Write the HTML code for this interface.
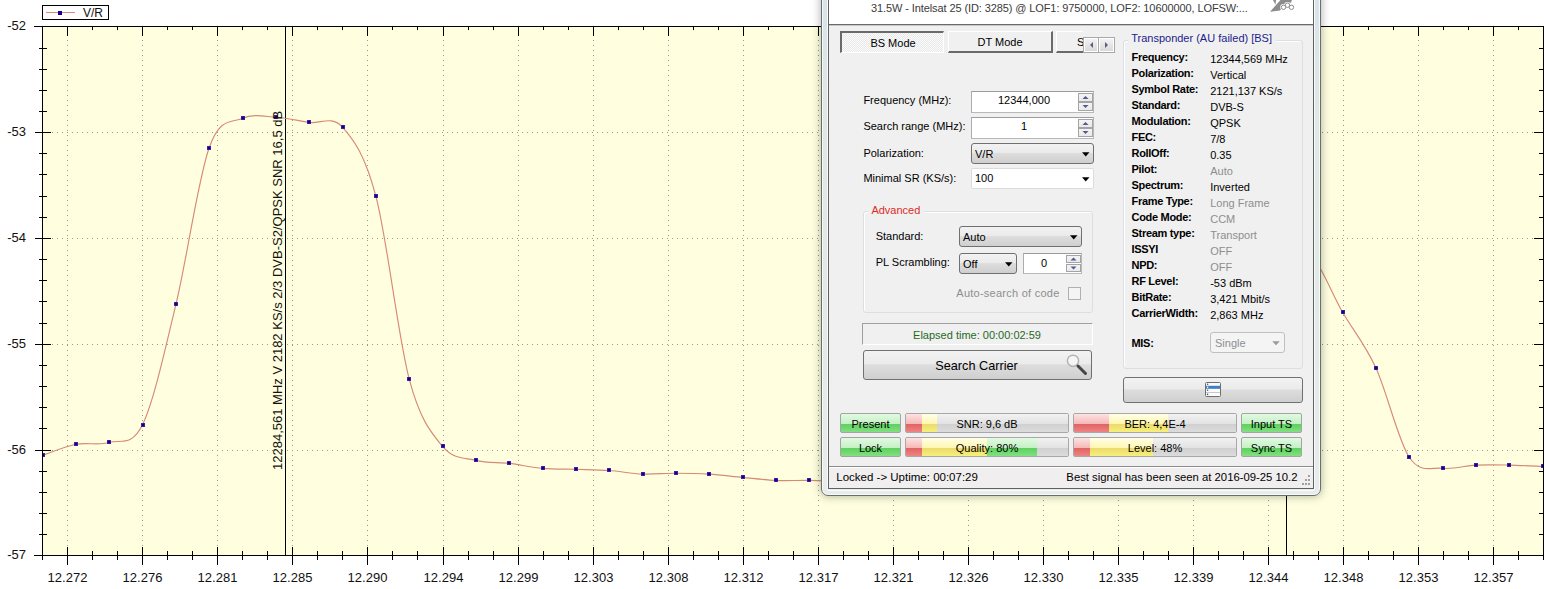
<!DOCTYPE html>
<html><head><meta charset="utf-8">
<style>
html,body{margin:0;padding:0;background:#fff;width:1544px;height:589px;overflow:hidden;position:relative;font-family:"Liberation Sans",sans-serif}
.al{font-family:"Liberation Sans",sans-serif;font-size:13px;fill:#111}
.lg{font-family:"Liberation Sans",sans-serif;font-size:12px;fill:#111}
</style></head><body>
<svg width="1544" height="589" viewBox="0 0 1544 589" style="position:absolute;left:0;top:0">
<rect x="43" y="27" width="1500" height="528" fill="#FFFFE0"/>
<path d="M67.5 30V555 M142.5 30V555 M217.5 30V555 M292.5 30V555 M367.5 30V555 M443.5 30V555 M518.5 30V555 M593.5 30V555 M668.5 30V555 M743.5 30V555 M818.5 30V555 M893.5 30V555 M968.5 30V555 M1043.5 30V555 M1118.5 30V555 M1193.5 30V555 M1268.5 30V555 M1343.5 30V555 M1418.5 30V555 M1493.5 30V555 M42 132.5H1543 M42 238.5H1543 M42 344.5H1543 M42 450.5H1543" stroke="#98988f" stroke-width="1" stroke-dasharray="1 4" fill="none" shape-rendering="crispEdges"/>
<path d="M34 26.5H1544 M34 555.5H1544 M42.5 26V560 M1543.5 26V555 M42.5 26v4 M42.5 551V560 M67.5 26v10 M67.5 547V565 M92.5 26v4 M92.5 551V560 M117.5 26v4 M117.5 551V560 M142.5 26v10 M142.5 547V565 M167.5 26v4 M167.5 551V560 M192.5 26v4 M192.5 551V560 M217.5 26v10 M217.5 547V565 M242.5 26v4 M242.5 551V560 M267.5 26v4 M267.5 551V560 M292.5 26v10 M292.5 547V565 M317.5 26v4 M317.5 551V560 M342.5 26v4 M342.5 551V560 M367.5 26v10 M367.5 547V565 M392.5 26v4 M392.5 551V560 M417.5 26v4 M417.5 551V560 M443.5 26v10 M443.5 547V565 M468.5 26v4 M468.5 551V560 M493.5 26v4 M493.5 551V560 M518.5 26v10 M518.5 547V565 M543.5 26v4 M543.5 551V560 M568.5 26v4 M568.5 551V560 M593.5 26v10 M593.5 547V565 M618.5 26v4 M618.5 551V560 M643.5 26v4 M643.5 551V560 M668.5 26v10 M668.5 547V565 M693.5 26v4 M693.5 551V560 M718.5 26v4 M718.5 551V560 M743.5 26v10 M743.5 547V565 M768.5 26v4 M768.5 551V560 M793.5 26v4 M793.5 551V560 M818.5 26v10 M818.5 547V565 M843.5 26v4 M843.5 551V560 M868.5 26v4 M868.5 551V560 M893.5 26v10 M893.5 547V565 M918.5 26v4 M918.5 551V560 M943.5 26v4 M943.5 551V560 M968.5 26v10 M968.5 547V565 M993.5 26v4 M993.5 551V560 M1018.5 26v4 M1018.5 551V560 M1043.5 26v10 M1043.5 547V565 M1068.5 26v4 M1068.5 551V560 M1093.5 26v4 M1093.5 551V560 M1118.5 26v10 M1118.5 547V565 M1143.5 26v4 M1143.5 551V560 M1168.5 26v4 M1168.5 551V560 M1193.5 26v10 M1193.5 547V565 M1218.5 26v4 M1218.5 551V560 M1243.5 26v4 M1243.5 551V560 M1268.5 26v10 M1268.5 547V565 M1293.5 26v4 M1293.5 551V560 M1318.5 26v4 M1318.5 551V560 M1343.5 26v10 M1343.5 547V565 M1368.5 26v4 M1368.5 551V560 M1393.5 26v4 M1393.5 551V560 M1418.5 26v10 M1418.5 547V565 M1443.5 26v4 M1443.5 551V560 M1468.5 26v4 M1468.5 551V560 M1493.5 26v10 M1493.5 547V565 M1518.5 26v4 M1518.5 551V560 M1543.5 26v4 M1543.5 551V560 M35 26.5H51 M1534 26.5H1543 M39 48.5H47 M1539 48.5H1543 M39 69.5H47 M1539 69.5H1543 M39 90.5H47 M1539 90.5H1543 M39 111.5H47 M1539 111.5H1543 M35 132.5H51 M1534 132.5H1543 M39 153.5H47 M1539 153.5H1543 M39 174.5H47 M1539 174.5H1543 M39 196.5H47 M1539 196.5H1543 M39 217.5H47 M1539 217.5H1543 M35 238.5H51 M1534 238.5H1543 M39 259.5H47 M1539 259.5H1543 M39 280.5H47 M1539 280.5H1543 M39 301.5H47 M1539 301.5H1543 M39 323.5H47 M1539 323.5H1543 M35 344.5H51 M1534 344.5H1543 M39 365.5H47 M1539 365.5H1543 M39 386.5H47 M1539 386.5H1543 M39 407.5H47 M1539 407.5H1543 M39 428.5H47 M1539 428.5H1543 M35 450.5H51 M1534 450.5H1543 M39 471.5H47 M1539 471.5H1543 M39 492.5H47 M1539 492.5H1543 M39 513.5H47 M1539 513.5H1543 M39 534.5H47 M1539 534.5H1543 M35 555.5H51 M1534 555.5H1543" stroke="#000" stroke-width="1" fill="none" shape-rendering="crispEdges"/>
<text x="67.5" y="582" text-anchor="middle" class="al">12.272</text>
<text x="142.5" y="582" text-anchor="middle" class="al">12.276</text>
<text x="217.5" y="582" text-anchor="middle" class="al">12.281</text>
<text x="292.5" y="582" text-anchor="middle" class="al">12.285</text>
<text x="367.5" y="582" text-anchor="middle" class="al">12.290</text>
<text x="443.5" y="582" text-anchor="middle" class="al">12.294</text>
<text x="518.5" y="582" text-anchor="middle" class="al">12.299</text>
<text x="593.5" y="582" text-anchor="middle" class="al">12.303</text>
<text x="668.5" y="582" text-anchor="middle" class="al">12.308</text>
<text x="743.5" y="582" text-anchor="middle" class="al">12.312</text>
<text x="818.5" y="582" text-anchor="middle" class="al">12.317</text>
<text x="893.5" y="582" text-anchor="middle" class="al">12.321</text>
<text x="968.5" y="582" text-anchor="middle" class="al">12.326</text>
<text x="1043.5" y="582" text-anchor="middle" class="al">12.330</text>
<text x="1118.5" y="582" text-anchor="middle" class="al">12.335</text>
<text x="1193.5" y="582" text-anchor="middle" class="al">12.339</text>
<text x="1268.5" y="582" text-anchor="middle" class="al">12.344</text>
<text x="1343.5" y="582" text-anchor="middle" class="al">12.348</text>
<text x="1418.5" y="582" text-anchor="middle" class="al">12.353</text>
<text x="1493.5" y="582" text-anchor="middle" class="al">12.357</text>
<text x="26" y="30.3" text-anchor="end" class="al">-52</text>
<text x="26" y="136.3" text-anchor="end" class="al">-53</text>
<text x="26" y="242.3" text-anchor="end" class="al">-54</text>
<text x="26" y="348.3" text-anchor="end" class="al">-55</text>
<text x="26" y="454.3" text-anchor="end" class="al">-56</text>
<text x="26" y="559.3" text-anchor="end" class="al">-57</text>
<path d="M285.5 27V555M1286.5 27V555" stroke="#000" stroke-width="1" shape-rendering="crispEdges"/>
<clipPath id="pc"><rect x="43" y="27" width="1500" height="528"/></clipPath>
<g clip-path="url(#pc)"><path d="M42.60 455.40C48.16 453.55 64.82 446.45 75.93 444.30C87.04 442.15 98.16 445.78 109.27 442.50C120.38 439.22 131.49 447.62 142.60 424.60C153.71 401.58 164.82 350.58 175.93 304.40C187.04 258.22 198.16 178.52 209.27 147.50C220.38 116.48 231.49 123.33 242.60 118.30C253.71 113.27 264.82 116.62 275.93 117.30C287.04 117.98 298.16 120.73 309.27 122.40C320.38 124.07 331.49 114.97 342.60 127.30C353.71 139.63 364.82 154.38 375.93 196.40C387.04 238.42 398.16 337.73 409.27 379.40C420.38 421.07 431.49 432.90 442.60 446.40C453.71 459.90 464.82 457.57 475.93 460.40C487.04 463.23 498.16 462.07 509.27 463.40C520.38 464.73 531.49 467.42 542.60 468.40C553.71 469.38 564.82 468.95 575.93 469.30C587.04 469.65 598.16 469.70 609.27 470.50C620.38 471.30 631.49 473.65 642.60 474.10C653.71 474.55 664.82 473.20 675.93 473.20C687.04 473.20 698.16 473.40 709.27 474.10C720.38 474.80 731.49 476.35 742.60 477.40C753.71 478.45 764.82 479.90 775.93 480.40C787.04 480.90 798.16 480.22 809.27 480.40C820.38 480.58 831.49 481.23 842.60 481.50C853.71 481.77 864.82 481.92 875.93 482.00C887.04 482.08 898.16 482.00 909.27 482.00C920.38 482.00 931.49 482.00 942.60 482.00C953.71 482.00 964.82 482.00 975.93 482.00C987.04 482.00 998.16 482.00 1009.27 482.00C1020.38 482.00 1031.49 482.00 1042.60 482.00C1053.71 482.00 1064.82 482.33 1075.93 482.00C1087.04 481.67 1098.16 482.00 1109.27 480.00C1120.38 478.00 1131.49 476.67 1142.60 470.00C1153.71 463.33 1164.82 455.00 1175.93 440.00C1187.04 425.00 1198.16 403.33 1209.27 380.00C1220.38 356.67 1231.49 319.67 1242.60 300.00C1253.71 280.33 1264.82 269.67 1275.93 262.00C1287.04 254.33 1298.16 245.63 1309.27 254.00C1320.38 262.37 1331.49 293.20 1342.60 312.20C1353.71 331.20 1364.82 343.82 1375.93 368.00C1387.04 392.18 1398.16 440.58 1409.27 457.30C1420.38 474.02 1431.49 467.00 1442.60 468.30C1453.71 469.60 1464.82 465.63 1475.93 465.10C1487.04 464.57 1498.16 464.87 1509.27 465.10C1520.38 465.33 1537.04 466.27 1542.60 466.50" stroke="#d68a76" stroke-width="1.15" fill="none"/>
<rect x="41" y="453" width="4" height="4" fill="#4a2aa8"/><rect x="41.7" y="453.7" width="2.6" height="2.6" fill="#0c0090"/>
<rect x="74" y="442" width="4" height="4" fill="#4a2aa8"/><rect x="74.7" y="442.7" width="2.6" height="2.6" fill="#0c0090"/>
<rect x="107" y="440" width="4" height="4" fill="#4a2aa8"/><rect x="107.7" y="440.7" width="2.6" height="2.6" fill="#0c0090"/>
<rect x="141" y="423" width="4" height="4" fill="#4a2aa8"/><rect x="141.7" y="423.7" width="2.6" height="2.6" fill="#0c0090"/>
<rect x="174" y="302" width="4" height="4" fill="#4a2aa8"/><rect x="174.7" y="302.7" width="2.6" height="2.6" fill="#0c0090"/>
<rect x="207" y="146" width="4" height="4" fill="#4a2aa8"/><rect x="207.7" y="146.7" width="2.6" height="2.6" fill="#0c0090"/>
<rect x="241" y="116" width="4" height="4" fill="#4a2aa8"/><rect x="241.7" y="116.7" width="2.6" height="2.6" fill="#0c0090"/>
<rect x="274" y="115" width="4" height="4" fill="#4a2aa8"/><rect x="274.7" y="115.7" width="2.6" height="2.6" fill="#0c0090"/>
<rect x="307" y="120" width="4" height="4" fill="#4a2aa8"/><rect x="307.7" y="120.7" width="2.6" height="2.6" fill="#0c0090"/>
<rect x="341" y="125" width="4" height="4" fill="#4a2aa8"/><rect x="341.7" y="125.7" width="2.6" height="2.6" fill="#0c0090"/>
<rect x="374" y="194" width="4" height="4" fill="#4a2aa8"/><rect x="374.7" y="194.7" width="2.6" height="2.6" fill="#0c0090"/>
<rect x="407" y="377" width="4" height="4" fill="#4a2aa8"/><rect x="407.7" y="377.7" width="2.6" height="2.6" fill="#0c0090"/>
<rect x="441" y="444" width="4" height="4" fill="#4a2aa8"/><rect x="441.7" y="444.7" width="2.6" height="2.6" fill="#0c0090"/>
<rect x="474" y="458" width="4" height="4" fill="#4a2aa8"/><rect x="474.7" y="458.7" width="2.6" height="2.6" fill="#0c0090"/>
<rect x="507" y="461" width="4" height="4" fill="#4a2aa8"/><rect x="507.7" y="461.7" width="2.6" height="2.6" fill="#0c0090"/>
<rect x="541" y="466" width="4" height="4" fill="#4a2aa8"/><rect x="541.7" y="466.7" width="2.6" height="2.6" fill="#0c0090"/>
<rect x="574" y="467" width="4" height="4" fill="#4a2aa8"/><rect x="574.7" y="467.7" width="2.6" height="2.6" fill="#0c0090"/>
<rect x="607" y="468" width="4" height="4" fill="#4a2aa8"/><rect x="607.7" y="468.7" width="2.6" height="2.6" fill="#0c0090"/>
<rect x="641" y="472" width="4" height="4" fill="#4a2aa8"/><rect x="641.7" y="472.7" width="2.6" height="2.6" fill="#0c0090"/>
<rect x="674" y="471" width="4" height="4" fill="#4a2aa8"/><rect x="674.7" y="471.7" width="2.6" height="2.6" fill="#0c0090"/>
<rect x="707" y="472" width="4" height="4" fill="#4a2aa8"/><rect x="707.7" y="472.7" width="2.6" height="2.6" fill="#0c0090"/>
<rect x="741" y="475" width="4" height="4" fill="#4a2aa8"/><rect x="741.7" y="475.7" width="2.6" height="2.6" fill="#0c0090"/>
<rect x="774" y="478" width="4" height="4" fill="#4a2aa8"/><rect x="774.7" y="478.7" width="2.6" height="2.6" fill="#0c0090"/>
<rect x="807" y="478" width="4" height="4" fill="#4a2aa8"/><rect x="807.7" y="478.7" width="2.6" height="2.6" fill="#0c0090"/>
<rect x="841" y="480" width="4" height="4" fill="#4a2aa8"/><rect x="841.7" y="480.7" width="2.6" height="2.6" fill="#0c0090"/>
<rect x="874" y="480" width="4" height="4" fill="#4a2aa8"/><rect x="874.7" y="480.7" width="2.6" height="2.6" fill="#0c0090"/>
<rect x="907" y="480" width="4" height="4" fill="#4a2aa8"/><rect x="907.7" y="480.7" width="2.6" height="2.6" fill="#0c0090"/>
<rect x="941" y="480" width="4" height="4" fill="#4a2aa8"/><rect x="941.7" y="480.7" width="2.6" height="2.6" fill="#0c0090"/>
<rect x="974" y="480" width="4" height="4" fill="#4a2aa8"/><rect x="974.7" y="480.7" width="2.6" height="2.6" fill="#0c0090"/>
<rect x="1007" y="480" width="4" height="4" fill="#4a2aa8"/><rect x="1007.7" y="480.7" width="2.6" height="2.6" fill="#0c0090"/>
<rect x="1041" y="480" width="4" height="4" fill="#4a2aa8"/><rect x="1041.7" y="480.7" width="2.6" height="2.6" fill="#0c0090"/>
<rect x="1074" y="480" width="4" height="4" fill="#4a2aa8"/><rect x="1074.7" y="480.7" width="2.6" height="2.6" fill="#0c0090"/>
<rect x="1107" y="478" width="4" height="4" fill="#4a2aa8"/><rect x="1107.7" y="478.7" width="2.6" height="2.6" fill="#0c0090"/>
<rect x="1141" y="468" width="4" height="4" fill="#4a2aa8"/><rect x="1141.7" y="468.7" width="2.6" height="2.6" fill="#0c0090"/>
<rect x="1174" y="438" width="4" height="4" fill="#4a2aa8"/><rect x="1174.7" y="438.7" width="2.6" height="2.6" fill="#0c0090"/>
<rect x="1207" y="378" width="4" height="4" fill="#4a2aa8"/><rect x="1207.7" y="378.7" width="2.6" height="2.6" fill="#0c0090"/>
<rect x="1241" y="298" width="4" height="4" fill="#4a2aa8"/><rect x="1241.7" y="298.7" width="2.6" height="2.6" fill="#0c0090"/>
<rect x="1274" y="260" width="4" height="4" fill="#4a2aa8"/><rect x="1274.7" y="260.7" width="2.6" height="2.6" fill="#0c0090"/>
<rect x="1307" y="252" width="4" height="4" fill="#4a2aa8"/><rect x="1307.7" y="252.7" width="2.6" height="2.6" fill="#0c0090"/>
<rect x="1341" y="310" width="4" height="4" fill="#4a2aa8"/><rect x="1341.7" y="310.7" width="2.6" height="2.6" fill="#0c0090"/>
<rect x="1374" y="366" width="4" height="4" fill="#4a2aa8"/><rect x="1374.7" y="366.7" width="2.6" height="2.6" fill="#0c0090"/>
<rect x="1407" y="455" width="4" height="4" fill="#4a2aa8"/><rect x="1407.7" y="455.7" width="2.6" height="2.6" fill="#0c0090"/>
<rect x="1441" y="466" width="4" height="4" fill="#4a2aa8"/><rect x="1441.7" y="466.7" width="2.6" height="2.6" fill="#0c0090"/>
<rect x="1474" y="463" width="4" height="4" fill="#4a2aa8"/><rect x="1474.7" y="463.7" width="2.6" height="2.6" fill="#0c0090"/>
<rect x="1507" y="463" width="4" height="4" fill="#4a2aa8"/><rect x="1507.7" y="463.7" width="2.6" height="2.6" fill="#0c0090"/>
<rect x="1541" y="464" width="4" height="4" fill="#4a2aa8"/><rect x="1541.7" y="464.7" width="2.6" height="2.6" fill="#0c0090"/>
</g>
<text transform="translate(281.7 470) rotate(-90)" class="al">12284,561 MHz V 2182 KS/s 2/3 DVB-S2/QPSK SNR 16,5 dB</text>
<rect x="42.5" y="5.5" width="66" height="14" fill="#fff" stroke="#000" stroke-width="1"/>
<path d="M46 12.5H75" stroke="#d98a78" stroke-width="1"/>
<rect x="58" y="11" width="4" height="4" fill="#10009a"/>
<text x="83" y="17" class="lg">V/R</text>
</svg>
<div style="position:absolute;left:821px;top:-30px;width:500px;height:526px;box-sizing:border-box;border:1px solid #686e6c;border-radius:0 0 7px 7px;background:linear-gradient(#d8e2ec,#dfe8e3 25%,#e2eae5 60%,#e8ecea);box-shadow:inset 0 0 0 1px rgba(255,255,255,0.75),0 0 9px 1px rgba(0,0,0,0.28)"></div>
<div style="position:absolute;left:827px;top:-30px;width:488px;height:521px;box-sizing:border-box;border:1px solid rgba(255,255,255,0.8);border-radius:0 0 2px 2px"></div>
<div style="position:absolute;left:828px;top:-30px;width:486px;height:519px;box-sizing:border-box;border:1px solid #5e6260;background:#f0f0f0"></div>
<div style="position:absolute;left:829px;top:0px;width:484px;height:24px;background:#fff"></div>
<div style="position:absolute;left:829px;top:24px;width:484px;height:1px;background:#6a6a6a"></div>
<div style="position:absolute;left:829px;top:25px;width:484px;height:1px;background:#c8c8c8"></div>
<div style="position:absolute;left:871px;top:2.69px;font-size:11px;line-height:11px;color:#3a3a3a;font-weight:normal;white-space:nowrap;letter-spacing:-0.1px">31.5W - Intelsat 25 (ID: 3285) @ LOF1: 9750000, LOF2: 10600000, LOFSW:...</div>
<svg style="position:absolute;left:1266px;top:0px" width="32" height="14" viewBox="0 0 32 14"><path d="M4 11.8 L14.5 0 L26 0 L25 2.5 L18 6 L14 10.5 Z" fill="#8c8c8c"/><path d="M7 0 L9.5 4.8 L10 0 Z" fill="#8c8c8c"/><circle cx="17.5" cy="7.3" r="3.3" fill="#fff"/><circle cx="21.5" cy="5.2" r="3.3" fill="#fff"/><circle cx="25.5" cy="7.3" r="3.3" fill="#fff"/><circle cx="17.5" cy="7.3" r="2.2" fill="#fff" stroke="#8c8c8c" stroke-width="1"/><circle cx="21.5" cy="5.2" r="2.2" fill="#fff" stroke="#8c8c8c" stroke-width="1"/><circle cx="25.5" cy="7.3" r="2.2" fill="#fff" stroke="#8c8c8c" stroke-width="1"/></svg>
<div style="position:absolute;left:840px;top:31px;width:104px;height:22px;box-sizing:border-box;border-style:solid;border-width:2px 1px 1px 2px;border-color:#6a6a6a #fff #fff #6a6a6a;background:repeating-conic-gradient(#fbfbfb 0 25%,#e9e9e9 0 50%) 0 0/2px 2px"></div>
<div style="position:absolute;left:693px;width:400px;text-align:center;top:37.69px;font-size:11px;line-height:11px;color:#000;font-weight:normal;white-space:nowrap;">BS Mode</div>
<div style="position:absolute;left:948px;top:31px;width:105px;height:22px;box-sizing:border-box;border-style:solid;border-width:1px 2px 2px 1px;border-color:#fff #6a6a6a #6a6a6a #fff;background:#f0f0f0"></div>
<div style="position:absolute;left:800px;width:400px;text-align:center;top:36.69px;font-size:11px;line-height:11px;color:#000;font-weight:normal;white-space:nowrap;">DT Mode</div>
<div style="position:absolute;left:1056px;top:31px;width:27px;height:22px;overflow:hidden"><div style="position:absolute;left:0;top:0;width:105px;height:22px;box-sizing:border-box;border-style:solid;border-width:1px 2px 2px 1px;border-color:#fff #6a6a6a #6a6a6a #fff;background:#f0f0f0"></div><div style="position:absolute;left:21px;top:5.7px;font-size:11px;line-height:11px">S</div></div>
<div style="position:absolute;left:1083px;top:37px;width:32px;height:16px;box-sizing:border-box;border:1px solid #a8a8a8;background:#a8a8a8"></div>
<div style="position:absolute;left:1084px;top:38px;width:14px;height:14px;box-sizing:border-box;border:1px solid #fff;background:linear-gradient(#f2f2f2,#e6e6e6 50%,#dadada)"></div>
<div style="position:absolute;left:1099px;top:38px;width:15px;height:14px;box-sizing:border-box;border:1px solid #fff;background:linear-gradient(#f2f2f2,#e6e6e6 50%,#dadada)"></div>
<svg style="position:absolute;left:1084px;top:38px" width="30" height="14"><path d="M9 4 L9 10 L6 7 Z" fill="#5a5f7a"/><path d="M21 4 L21 10 L24 7 Z" fill="#5a5f7a"/></svg>
<div style="position:absolute;left:863.4px;top:94.69px;font-size:11px;line-height:11px;color:#000;font-weight:normal;white-space:nowrap;">Frequency (MHz):</div>
<div style="position:absolute;left:863.4px;top:120.69px;font-size:11px;line-height:11px;color:#000;font-weight:normal;white-space:nowrap;">Search range (MHz):</div>
<div style="position:absolute;left:863.4px;top:147.69px;font-size:11px;line-height:11px;color:#000;font-weight:normal;white-space:nowrap;">Polarization:</div>
<div style="position:absolute;left:863.4px;top:172.69px;font-size:11px;line-height:11px;color:#000;font-weight:normal;white-space:nowrap;">Minimal SR (KS/s):</div>
<div style="position:absolute;left:971px;top:91px;width:123px;height:22px;box-sizing:border-box;border:1px solid;border-color:#9c9c9c #b8b8b8 #b8b8b8 #acacac;background:#fff"></div>
<div style="position:absolute;left:1078px;top:93px;width:15px;height:9px;box-sizing:border-box;border:1px solid #a4a4a4;background:linear-gradient(#f4f4f4,#e9e9ec)"></div>
<div style="position:absolute;left:1078px;top:102px;width:15px;height:9px;box-sizing:border-box;border:1px solid #a4a4a4;background:linear-gradient(#f4f4f4,#e9e9ec)"></div>
<svg style="position:absolute;left:1078px;top:93px" width="15" height="18"><path d="M4.5 6.1 L10.5 6.1 L7.5 2.9 Z" fill="#54598a"/><path d="M4.5 11.9 L10.5 11.9 L7.5 15.1 Z" fill="#54598a"/></svg>
<div style="position:absolute;left:824px;width:400px;text-align:center;top:94.69px;font-size:11px;line-height:11px;color:#000;font-weight:normal;white-space:nowrap;">12344,000</div>
<div style="position:absolute;left:971px;top:117px;width:123px;height:22px;box-sizing:border-box;border:1px solid;border-color:#9c9c9c #b8b8b8 #b8b8b8 #acacac;background:#fff"></div>
<div style="position:absolute;left:1078px;top:119px;width:15px;height:9px;box-sizing:border-box;border:1px solid #a4a4a4;background:linear-gradient(#f4f4f4,#e9e9ec)"></div>
<div style="position:absolute;left:1078px;top:128px;width:15px;height:9px;box-sizing:border-box;border:1px solid #a4a4a4;background:linear-gradient(#f4f4f4,#e9e9ec)"></div>
<svg style="position:absolute;left:1078px;top:119px" width="15" height="18"><path d="M4.5 6.1 L10.5 6.1 L7.5 2.9 Z" fill="#54598a"/><path d="M4.5 11.9 L10.5 11.9 L7.5 15.1 Z" fill="#54598a"/></svg>
<div style="position:absolute;left:824px;width:400px;text-align:center;top:121.19px;font-size:11px;line-height:11px;color:#000;font-weight:normal;white-space:nowrap;">1</div>
<div style="position:absolute;left:971px;top:143px;width:123px;height:21px;box-sizing:border-box;border:1px solid #707070;border-radius:3px;background:linear-gradient(#f2f2f2,#ebebeb 45%,#dddddd 50%,#cfcfcf)"></div>
<div style="position:absolute;left:975px;top:148.99px;font-size:11px;line-height:11px;color:#000;font-weight:normal;white-space:nowrap;">V/R</div>
<svg style="position:absolute;left:1079.5px;top:143px" width="12" height="21"><path d="M2 9.3 L9.5 9.3 L5.75 13.5 Z" fill="#000"/></svg>
<div style="position:absolute;left:971px;top:168px;width:123px;height:21px;box-sizing:border-box;border:1px solid #dcdcdc;border-radius:2px;background:#fff"></div>
<div style="position:absolute;left:975px;top:173.19px;font-size:11px;line-height:11px;color:#000;font-weight:normal;white-space:nowrap;">100</div>
<svg style="position:absolute;left:1079.5px;top:168px" width="12" height="21"><path d="M2 9.3 L9.5 9.3 L5.75 13.5 Z" fill="#000"/></svg>
<div style="position:absolute;left:863px;top:211px;width:230px;height:102px;box-sizing:border-box;border:1px solid #d9dfe2;border-radius:3px;box-shadow:inset 1px 1px 0 #fff"></div>
<div style="position:absolute;left:868px;top:206px;width:56px;height:10px;background:#f0f0f0"></div>
<div style="position:absolute;left:871.4px;top:204.69px;font-size:11px;line-height:11px;color:#e02b1f;font-weight:normal;white-space:nowrap;">Advanced</div>
<div style="position:absolute;left:875.7px;top:230.69px;font-size:11px;line-height:11px;color:#000;font-weight:normal;white-space:nowrap;">Standard:</div>
<div style="position:absolute;left:959px;top:226px;width:123px;height:21px;box-sizing:border-box;border:1px solid #707070;border-radius:3px;background:linear-gradient(#f2f2f2,#ebebeb 45%,#dddddd 50%,#cfcfcf)"></div>
<div style="position:absolute;left:963px;top:231.99px;font-size:11px;line-height:11px;color:#000;font-weight:normal;white-space:nowrap;">Auto</div>
<svg style="position:absolute;left:1067.5px;top:226px" width="12" height="21"><path d="M2 9.3 L9.5 9.3 L5.75 13.5 Z" fill="#000"/></svg>
<div style="position:absolute;left:875.7px;top:256.69px;font-size:11px;line-height:11px;color:#000;font-weight:normal;white-space:nowrap;">PL Scrambling:</div>
<div style="position:absolute;left:959px;top:253px;width:58px;height:21px;box-sizing:border-box;border:1px solid #707070;border-radius:3px;background:linear-gradient(#f2f2f2,#ebebeb 45%,#dddddd 50%,#cfcfcf)"></div>
<div style="position:absolute;left:963px;top:258.99px;font-size:11px;line-height:11px;color:#000;font-weight:normal;white-space:nowrap;">Off</div>
<svg style="position:absolute;left:1002.5px;top:253px" width="12" height="21"><path d="M2 9.3 L9.5 9.3 L5.75 13.5 Z" fill="#000"/></svg>
<div style="position:absolute;left:1023px;top:253px;width:59px;height:21px;box-sizing:border-box;border:1px solid;border-color:#9c9c9c #b8b8b8 #b8b8b8 #acacac;background:#fff"></div>
<div style="position:absolute;left:1066px;top:255px;width:15px;height:8px;box-sizing:border-box;border:1px solid #a4a4a4;background:linear-gradient(#f4f4f4,#e9e9ec)"></div>
<div style="position:absolute;left:1066px;top:264px;width:15px;height:8px;box-sizing:border-box;border:1px solid #a4a4a4;background:linear-gradient(#f4f4f4,#e9e9ec)"></div>
<svg style="position:absolute;left:1066px;top:255px" width="15" height="17"><path d="M4.5 5.6 L10.5 5.6 L7.5 2.4 Z" fill="#54598a"/><path d="M4.5 11.4 L10.5 11.4 L7.5 14.6 Z" fill="#54598a"/></svg>
<div style="position:absolute;left:844px;width:400px;text-align:center;top:257.69px;font-size:11px;line-height:11px;color:#000;font-weight:normal;white-space:nowrap;">0</div>
<div style="position:absolute;left:956.3px;top:287.69px;font-size:11px;line-height:11px;color:#8e8e8e;font-weight:normal;white-space:nowrap;letter-spacing:0.25px">Auto-search of code</div>
<div style="position:absolute;left:1068px;top:287px;width:13px;height:13px;box-sizing:border-box;border:1px solid #b0b0b0;background:#f4f4f4"></div>
<div style="position:absolute;left:862px;top:323px;width:231px;height:22px;box-sizing:border-box;border:1px solid;border-color:#a0a0a0 #fff #fff #a0a0a0;background:#f0f0f0"></div>
<div style="position:absolute;left:777px;width:400px;text-align:center;top:329.69px;font-size:11px;line-height:11px;color:#1f6a1f;font-weight:normal;white-space:nowrap;">Elapsed time: 00:00:02:59</div>
<div style="position:absolute;left:863px;top:350px;width:229px;height:30px;box-sizing:border-box;border:1px solid #707070;border-radius:3px;background:linear-gradient(#f2f2f2,#ebebeb 45%,#dddddd 50%,#cfcfcf)"></div>
<div style="position:absolute;left:776.5px;width:400px;text-align:center;top:360.25px;font-size:12.7px;line-height:12.7px;color:#000;font-weight:normal;white-space:nowrap;">Search Carrier</div>
<svg style="position:absolute;left:1064px;top:353px" width="26" height="24"><circle cx="9" cy="7.8" r="5.6" fill="rgba(255,255,255,0.5)" stroke="#b4b4b4" stroke-width="1.5"/><path d="M14 13 L21.5 20.5" stroke="#454545" stroke-width="3" stroke-linecap="round"/></svg>
<div style="position:absolute;left:1123px;top:40px;width:180px;height:329px;box-sizing:border-box;border:1px solid #d9dfe2;border-radius:3px;box-shadow:inset 1px 1px 0 #fff"></div>
<div style="position:absolute;left:1128px;top:32px;width:148px;height:12px;background:#f0f0f0"></div>
<div style="position:absolute;left:1131.2px;top:32.69px;font-size:11px;line-height:11px;color:#1c1c8c;font-weight:normal;white-space:nowrap;">Transponder (AU failed) [BS]</div>
<div style="position:absolute;left:1131.5px;top:51.69px;font-size:11px;line-height:11px;color:#000;font-weight:bold;white-space:nowrap;letter-spacing:-0.3px">Frequency:</div>
<div style="position:absolute;left:1210.2px;top:53.69px;font-size:11px;line-height:11px;color:#000;font-weight:normal;white-space:nowrap;">12344,569 MHz</div>
<div style="position:absolute;left:1131.5px;top:67.69px;font-size:11px;line-height:11px;color:#000;font-weight:bold;white-space:nowrap;letter-spacing:-0.3px">Polarization:</div>
<div style="position:absolute;left:1210.2px;top:69.69px;font-size:11px;line-height:11px;color:#000;font-weight:normal;white-space:nowrap;">Vertical</div>
<div style="position:absolute;left:1131.5px;top:83.69px;font-size:11px;line-height:11px;color:#000;font-weight:bold;white-space:nowrap;letter-spacing:-0.3px">Symbol Rate:</div>
<div style="position:absolute;left:1210.2px;top:85.69px;font-size:11px;line-height:11px;color:#000;font-weight:normal;white-space:nowrap;">2121,137 KS/s</div>
<div style="position:absolute;left:1131.5px;top:99.69px;font-size:11px;line-height:11px;color:#000;font-weight:bold;white-space:nowrap;letter-spacing:-0.3px">Standard:</div>
<div style="position:absolute;left:1210.2px;top:101.69px;font-size:11px;line-height:11px;color:#000;font-weight:normal;white-space:nowrap;">DVB-S</div>
<div style="position:absolute;left:1131.5px;top:115.69px;font-size:11px;line-height:11px;color:#000;font-weight:bold;white-space:nowrap;letter-spacing:-0.3px">Modulation:</div>
<div style="position:absolute;left:1210.2px;top:117.69px;font-size:11px;line-height:11px;color:#000;font-weight:normal;white-space:nowrap;">QPSK</div>
<div style="position:absolute;left:1131.5px;top:131.69px;font-size:11px;line-height:11px;color:#000;font-weight:bold;white-space:nowrap;letter-spacing:-0.3px">FEC:</div>
<div style="position:absolute;left:1210.2px;top:133.69px;font-size:11px;line-height:11px;color:#000;font-weight:normal;white-space:nowrap;">7/8</div>
<div style="position:absolute;left:1131.5px;top:147.69px;font-size:11px;line-height:11px;color:#000;font-weight:bold;white-space:nowrap;letter-spacing:-0.3px">RollOff:</div>
<div style="position:absolute;left:1210.2px;top:149.69px;font-size:11px;line-height:11px;color:#000;font-weight:normal;white-space:nowrap;">0.35</div>
<div style="position:absolute;left:1131.5px;top:163.69px;font-size:11px;line-height:11px;color:#000;font-weight:bold;white-space:nowrap;letter-spacing:-0.3px">Pilot:</div>
<div style="position:absolute;left:1210.2px;top:165.69px;font-size:11px;line-height:11px;color:#8e8e8e;font-weight:normal;white-space:nowrap;">Auto</div>
<div style="position:absolute;left:1131.5px;top:179.69px;font-size:11px;line-height:11px;color:#000;font-weight:bold;white-space:nowrap;letter-spacing:-0.3px">Spectrum:</div>
<div style="position:absolute;left:1210.2px;top:181.69px;font-size:11px;line-height:11px;color:#000;font-weight:normal;white-space:nowrap;">Inverted</div>
<div style="position:absolute;left:1131.5px;top:195.69px;font-size:11px;line-height:11px;color:#000;font-weight:bold;white-space:nowrap;letter-spacing:-0.3px">Frame Type:</div>
<div style="position:absolute;left:1210.2px;top:197.69px;font-size:11px;line-height:11px;color:#8e8e8e;font-weight:normal;white-space:nowrap;">Long Frame</div>
<div style="position:absolute;left:1131.5px;top:211.69px;font-size:11px;line-height:11px;color:#000;font-weight:bold;white-space:nowrap;letter-spacing:-0.3px">Code Mode:</div>
<div style="position:absolute;left:1210.2px;top:213.69px;font-size:11px;line-height:11px;color:#8e8e8e;font-weight:normal;white-space:nowrap;">CCM</div>
<div style="position:absolute;left:1131.5px;top:227.69px;font-size:11px;line-height:11px;color:#000;font-weight:bold;white-space:nowrap;letter-spacing:-0.3px">Stream type:</div>
<div style="position:absolute;left:1210.2px;top:229.69px;font-size:11px;line-height:11px;color:#8e8e8e;font-weight:normal;white-space:nowrap;">Transport</div>
<div style="position:absolute;left:1131.5px;top:243.69px;font-size:11px;line-height:11px;color:#000;font-weight:bold;white-space:nowrap;letter-spacing:-0.3px">ISSYI</div>
<div style="position:absolute;left:1210.2px;top:245.69px;font-size:11px;line-height:11px;color:#8e8e8e;font-weight:normal;white-space:nowrap;">OFF</div>
<div style="position:absolute;left:1131.5px;top:259.69px;font-size:11px;line-height:11px;color:#000;font-weight:bold;white-space:nowrap;letter-spacing:-0.3px">NPD:</div>
<div style="position:absolute;left:1210.2px;top:261.69px;font-size:11px;line-height:11px;color:#8e8e8e;font-weight:normal;white-space:nowrap;">OFF</div>
<div style="position:absolute;left:1131.5px;top:275.69px;font-size:11px;line-height:11px;color:#000;font-weight:bold;white-space:nowrap;letter-spacing:-0.3px">RF Level:</div>
<div style="position:absolute;left:1210.2px;top:277.69px;font-size:11px;line-height:11px;color:#000;font-weight:normal;white-space:nowrap;">-53 dBm</div>
<div style="position:absolute;left:1131.5px;top:291.69px;font-size:11px;line-height:11px;color:#000;font-weight:bold;white-space:nowrap;letter-spacing:-0.3px">BitRate:</div>
<div style="position:absolute;left:1210.2px;top:293.69px;font-size:11px;line-height:11px;color:#000;font-weight:normal;white-space:nowrap;">3,421 Mbit/s</div>
<div style="position:absolute;left:1131.5px;top:307.69px;font-size:11px;line-height:11px;color:#000;font-weight:bold;white-space:nowrap;letter-spacing:-0.3px">CarrierWidth:</div>
<div style="position:absolute;left:1210.2px;top:309.69px;font-size:11px;line-height:11px;color:#000;font-weight:normal;white-space:nowrap;">2,863 MHz</div>
<div style="position:absolute;left:1131.5px;top:337.69px;font-size:11px;line-height:11px;color:#000;font-weight:bold;white-space:nowrap;letter-spacing:-0.3px">MIS:</div>
<div style="position:absolute;left:1210px;top:332px;width:75px;height:21px;box-sizing:border-box;border:1px solid #c0c0c0;border-radius:3px;background:#f4f4f4"></div>
<div style="position:absolute;left:1215px;top:338.19px;font-size:11px;line-height:11px;color:#8e8e8e;font-weight:normal;white-space:nowrap;">Single</div>
<svg style="position:absolute;left:1270px;top:332px" width="12" height="21"><path d="M2.2 9.2 L9.8 9.2 L6 13.3 Z" fill="#9a9a9a"/></svg>
<div style="position:absolute;left:1123px;top:377px;width:180px;height:26px;box-sizing:border-box;border:1px solid #707070;border-radius:3px;background:linear-gradient(#f2f2f2,#ebebeb 45%,#dddddd 50%,#cfcfcf)"></div>
<svg style="position:absolute;left:1205px;top:382px" width="16" height="15"><rect x="0.5" y="0.5" width="15" height="14" rx="1" fill="#fbfbfb" stroke="#6e6e6e"/><rect x="1" y="3.8" width="14" height="3" fill="#3f80c4"/><path d="M1 10.5H15" stroke="#c8c8c8"/><circle cx="2.6" cy="2.3" r="0.8" fill="#555"/><circle cx="2.6" cy="5.3" r="0.8" fill="#fff"/><circle cx="2.6" cy="8.3" r="0.8" fill="#555"/><circle cx="2.6" cy="12.4" r="0.8" fill="#555"/></svg>
<div style="position:absolute;left:840px;top:413px;width:61px;height:20px;box-sizing:border-box;border:1px solid #a4a4a4;border-radius:2px;background:linear-gradient(#e2fae2,#c4f0c4 55%,#5cd05c 55%,#82e082)"></div>
<div style="position:absolute;left:670.5px;width:400px;text-align:center;top:419.29px;font-size:11px;line-height:11px;color:#000;font-weight:normal;white-space:nowrap;">Present</div>
<div style="position:absolute;left:840px;top:437px;width:61px;height:20px;box-sizing:border-box;border:1px solid #a4a4a4;border-radius:2px;background:linear-gradient(#e2fae2,#c4f0c4 55%,#5cd05c 55%,#82e082)"></div>
<div style="position:absolute;left:670.5px;width:400px;text-align:center;top:443.29px;font-size:11px;line-height:11px;color:#000;font-weight:normal;white-space:nowrap;">Lock</div>
<div style="position:absolute;left:1241px;top:413px;width:61px;height:20px;box-sizing:border-box;border:1px solid #a4a4a4;border-radius:2px;background:linear-gradient(#e2fae2,#c4f0c4 55%,#5cd05c 55%,#82e082)"></div>
<div style="position:absolute;left:1071.5px;width:400px;text-align:center;top:419.29px;font-size:11px;line-height:11px;color:#000;font-weight:normal;white-space:nowrap;">Input TS</div>
<div style="position:absolute;left:1241px;top:437px;width:61px;height:20px;box-sizing:border-box;border:1px solid #a4a4a4;border-radius:2px;background:linear-gradient(#e2fae2,#c4f0c4 55%,#5cd05c 55%,#82e082)"></div>
<div style="position:absolute;left:1071.5px;width:400px;text-align:center;top:443.29px;font-size:11px;line-height:11px;color:#000;font-weight:normal;white-space:nowrap;">Sync TS</div>
<div style="position:absolute;left:905px;top:413px;width:164px;height:20px;box-sizing:border-box;border:1px solid #a8a8a8;border-radius:2px;overflow:hidden">
<div style="position:absolute;left:0px;top:0;width:16px;height:18px;background:linear-gradient(#fde2e2,#f6b8b8 55%,#de6262 55%,#f08383)"></div>
<div style="position:absolute;left:16px;top:0;width:15px;height:18px;background:linear-gradient(#ffffe8,#fff6b0 55%,#ecd96c 55%,#f6f07c)"></div>
<div style="position:absolute;left:31px;top:0;width:131px;height:18px;background:linear-gradient(#f2f2f2,#e2e2e2 55%,#d0d0d0 55%,#dcdcdc)"></div>
</div>
<div style="position:absolute;left:787.0px;width:400px;text-align:center;top:419.29px;font-size:11px;line-height:11px;color:#000;font-weight:normal;white-space:nowrap;">SNR: 9,6 dB</div>
<div style="position:absolute;left:905px;top:437px;width:164px;height:20px;box-sizing:border-box;border:1px solid #a8a8a8;border-radius:2px;overflow:hidden">
<div style="position:absolute;left:0px;top:0;width:16px;height:18px;background:linear-gradient(#fde2e2,#f6b8b8 55%,#de6262 55%,#f08383)"></div>
<div style="position:absolute;left:16px;top:0;width:65px;height:18px;background:linear-gradient(#ffffe8,#fff6b0 55%,#ecd96c 55%,#f6f07c)"></div>
<div style="position:absolute;left:81px;top:0;width:50px;height:18px;background:linear-gradient(#e2fae2,#c4f0c4 55%,#5cd05c 55%,#82e082)"></div>
<div style="position:absolute;left:131px;top:0;width:31px;height:18px;background:linear-gradient(#f2f2f2,#e2e2e2 55%,#d0d0d0 55%,#dcdcdc)"></div>
</div>
<div style="position:absolute;left:787.0px;width:400px;text-align:center;top:443.29px;font-size:11px;line-height:11px;color:#000;font-weight:normal;white-space:nowrap;">Quality: 80%</div>
<div style="position:absolute;left:1073px;top:413px;width:164px;height:20px;box-sizing:border-box;border:1px solid #a8a8a8;border-radius:2px;overflow:hidden">
<div style="position:absolute;left:0px;top:0;width:35px;height:18px;background:linear-gradient(#fde2e2,#f6b8b8 55%,#de6262 55%,#f08383)"></div>
<div style="position:absolute;left:35px;top:0;width:59px;height:18px;background:linear-gradient(#ffffe8,#fff6b0 55%,#ecd96c 55%,#f6f07c)"></div>
<div style="position:absolute;left:94px;top:0;width:68px;height:18px;background:linear-gradient(#f2f2f2,#e2e2e2 55%,#d0d0d0 55%,#dcdcdc)"></div>
</div>
<div style="position:absolute;left:955.0px;width:400px;text-align:center;top:419.29px;font-size:11px;line-height:11px;color:#000;font-weight:normal;white-space:nowrap;">BER: 4,4E-4</div>
<div style="position:absolute;left:1073px;top:437px;width:164px;height:20px;box-sizing:border-box;border:1px solid #a8a8a8;border-radius:2px;overflow:hidden">
<div style="position:absolute;left:0px;top:0;width:16px;height:18px;background:linear-gradient(#fde2e2,#f6b8b8 55%,#de6262 55%,#f08383)"></div>
<div style="position:absolute;left:16px;top:0;width:63px;height:18px;background:linear-gradient(#ffffe8,#fff6b0 55%,#ecd96c 55%,#f6f07c)"></div>
<div style="position:absolute;left:79px;top:0;width:83px;height:18px;background:linear-gradient(#f2f2f2,#e2e2e2 55%,#d0d0d0 55%,#dcdcdc)"></div>
</div>
<div style="position:absolute;left:955.0px;width:400px;text-align:center;top:443.29px;font-size:11px;line-height:11px;color:#000;font-weight:normal;white-space:nowrap;">Level: 48%</div>
<div style="position:absolute;left:829px;top:466px;width:484px;height:1px;background:#8c8c8c"></div>
<div style="position:absolute;left:829px;top:467px;width:484px;height:1px;background:#fff"></div>
<div style="position:absolute;left:829px;top:468px;width:484px;height:20px;background:#f0eeee"></div>
<div style="position:absolute;left:836.3px;top:472.07px;font-size:11.5px;line-height:11.5px;color:#000;font-weight:normal;white-space:nowrap;">Locked -&gt; Uptime: 00:07:29</div>
<div style="position:absolute;right:246.5px;top:472.23px;font-size:11.3px;line-height:11.3px;color:#000;font-weight:normal;white-space:nowrap;">Best signal has been seen at 2016-09-25 10.2</div>
<svg style="position:absolute;left:1300px;top:474px" width="12" height="12"><g fill="#a0a0a0"><rect x="8" y="1" width="2" height="2"/><rect x="5" y="5" width="2" height="2"/><rect x="8" y="5" width="2" height="2"/><rect x="2" y="9" width="2" height="2"/><rect x="5" y="9" width="2" height="2"/><rect x="8" y="9" width="2" height="2"/></g></svg>
</body></html>
